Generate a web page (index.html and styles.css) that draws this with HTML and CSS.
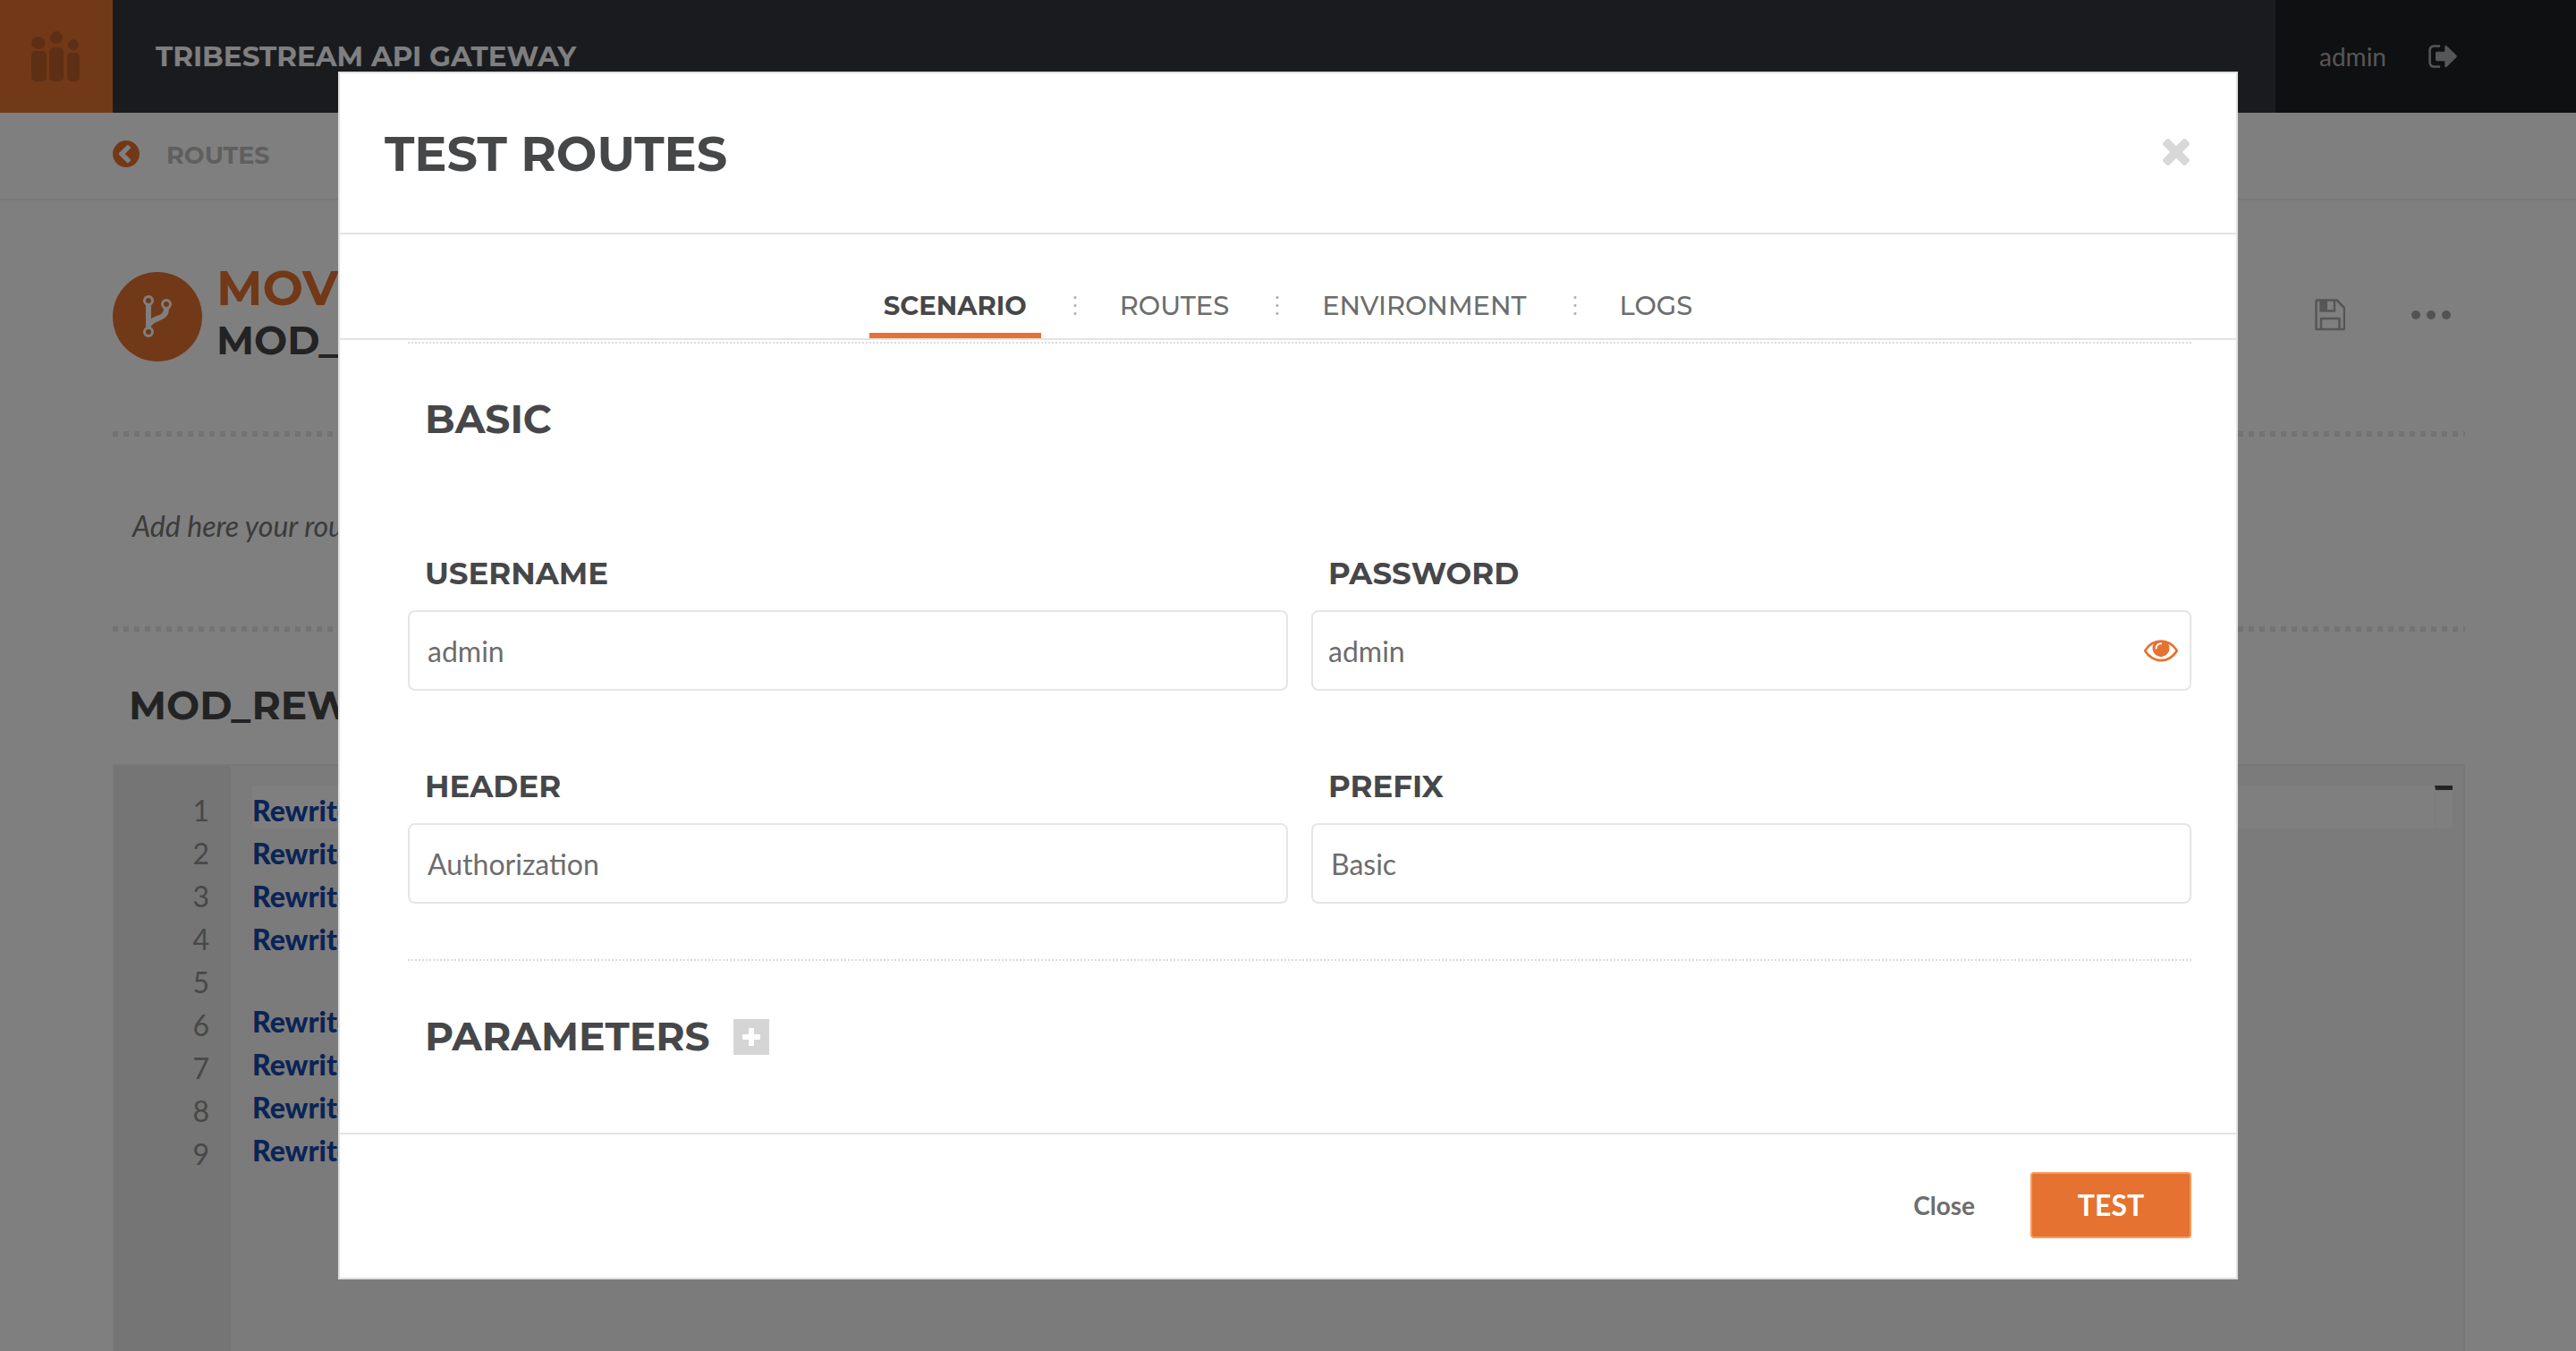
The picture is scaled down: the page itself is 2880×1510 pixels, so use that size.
FILE: index.html
```
<!DOCTYPE html>
<html lang="en">
<head>
<meta charset="utf-8">
<title>Tribestream API Gateway</title>
<link rel="stylesheet" href="styles.css">
</head>
<body>
<div class="page">
  <header class="topbar">
    <a class="logo" href="#" aria-label="Home">
      <svg width="126" height="126" viewBox="0 0 126 126" fill="#bc5e2a">
        <ellipse cx="43" cy="48" rx="8" ry="7"/><rect x="35" y="57" width="17" height="34" rx="5"/>
        <circle cx="63" cy="42" r="7"/><rect x="55" y="53" width="16" height="38" rx="5"/>
        <circle cx="82" cy="50" r="6"/><rect x="75" y="59" width="14" height="32" rx="5"/>
      </svg>
    </a>
    <h1 class="brand">TRIBESTREAM API GATEWAY</h1>
    <div class="account">
      <span>admin</span>
      <button class="icon-btn" aria-label="Sign out">
        <svg width="36" height="36" viewBox="0 0 1792 1792" fill="currentColor"><path d="M704 1440q0 4 1 20t.5 26.5-3 23.5-10 19.5-20.5 6.5h-320q-119 0-203.500-84.500t-84.500-203.500v-704q0-119 84.500-203.500t203.500-84.500h320q13 0 22.500 9.500t9.500 22.500q0 4 1 20t.5 26.500-3 23.500-10 19.500-20.500 6.500h-320q-66 0-113 47t-47 113v704q0 66 47 113t113 47h312l11.500 1 11.500 3 8 5.500 7 9 2 13.500zm928-544q0 26-19 45l-544 544q-19 19-45 19t-45-19-19-45v-288h-448q-26 0-45-19t-19-45v-384q0-26 19-45t45-19h448v-288q0-26 19-45t45-19 45 19l544 544q19 19 19 45z"/></svg>
      </button>
    </div>
  </header>

  <nav class="breadcrumb">
    <a href="#">
      <svg width="30" height="30" viewBox="128 128 1536 1536" fill="#e57230"><path d="M1037 1395l102-102q19-19 19-45t-19-45l-307-307 307-307q19-19 19-45t-19-45l-102-102q-19-19-45-19t-45 19l-454 454q-19 19-19 45t19 45l454 454q19 19 45 19t45-19zm627-499q0 209-103 385.500t-279.500 279.500-385.500 103-385.500-103-279.500-279.500-103-385.500 103-385.500 279.500-279.500 385.500-103 385.500 103 279.500 279.500 103 385.500z"/></svg>
      <span>ROUTES</span>
    </a>
  </nav>

  <main class="content">
    <section class="route-head">
      <div class="route-badge">
        <svg width="32" height="48" viewBox="0 0 32 48" fill="none" stroke="#fff">
          <path stroke-width="6" d="M6 11V37M26 15C26 28 10 24 7 33"/>
          <g fill="#e57230" stroke-width="3"><circle cx="6" cy="6" r="4.500"/><circle cx="26" cy="10" r="4.500"/><circle cx="6" cy="41" r="4.500"/></g>
        </svg>
      </div>
      <div class="route-title">
        <h2>MOVIES</h2>
        <p>MOD_REWRITE</p>
      </div>
      <div class="route-actions">
        <button class="icon-btn" aria-label="Save">
          <svg width="34" height="36" viewBox="0 0 34 36" fill="none" stroke="#acacac" stroke-width="2.500" stroke-linejoin="round"><path d="M2 1.500H24.500L33 10V34H1.500V2Z"/><path d="M6.500 2V13.500H22V2M7 34V22H27.500V34"/><path fill="#acacac" stroke="none" d="M6 2H14V14H6Z"/></svg>
        </button>
        <button class="icon-btn" aria-label="More actions">
          <svg width="44" height="10" viewBox="0 0 44 10" fill="#a5a7a6"><circle cx="5" cy="5" r="5"/><circle cx="22" cy="5" r="5"/><circle cx="39" cy="5" r="5"/></svg>
        </button>
      </div>
    </section>
    <section class="description">Add here your route description</section>
    <h3 class="editor-title">MOD_REWRITE</h3>
    <div class="editor">
      <div class="gutter">
        <ol class="lines"><li>1</li><li>2</li><li>3</li><li>4</li><li>5</li><li>6</li><li>7</li><li>8</li><li>9</li></ol>
      </div>
      <div class="code">
        <div class="lines"><b>RewriteEngine</b><b>RewriteCond</b><b>RewriteCond</b><b>RewriteRule</b><b></b><b>RewriteCond</b><b>RewriteCond</b><b>RewriteCond</b><b>RewriteRule</b></div>
        <div class="ruler"></div>
      </div>
    </div>
  </main>
</div>

<div class="overlay">
  <div class="modal" role="dialog" aria-modal="true" aria-labelledby="dialog-title">
    <header class="modal-head">
      <h2 id="dialog-title">TEST ROUTES</h2>
      <button class="icon-btn close-x" aria-label="Close dialog">
        <svg width="30" height="30" viewBox="302 366 1188 1188" fill="currentColor"><path d="M1490 1322q0 40-28 68l-136 136q-28 28-68 28t-68-28l-294-294-294 294q-28 28-68 28t-68-28l-136-136q-28-28-28-68t28-68l294-294-294-294q-28-28-28-68t28-68l136-136q28-28 68-28t68 28l294 294 294-294q28-28 68-28t68 28l136 136q28 28 28 68t-28 68l-294 294 294 294q28 28 28 68z"/></svg>
      </button>
    </header>

    <div class="tabs" role="tablist">
      <button class="tab active" role="tab" aria-selected="true">SCENARIO</button>
      <i class="dots"></i>
      <button class="tab" role="tab">ROUTES</button>
      <i class="dots"></i>
      <button class="tab" role="tab">ENVIRONMENT</button>
      <i class="dots"></i>
      <button class="tab" role="tab">LOGS</button>
    </div>

    <form class="modal-body" id="scenario">
      <section class="group">
        <h3>BASIC</h3>
        <div class="fields">
          <div class="field"><label for="username">USERNAME</label><input id="username" type="text" value="admin"></div>
          <div class="field">
            <label for="password">PASSWORD</label>
            <div class="secret">
              <input id="password" type="text" value="admin">
              <button type="button" class="icon-btn reveal" aria-label="Hide password">
                <svg width="38" height="38" viewBox="0 0 1792 1792" fill="currentColor"><path d="M1664 960q-152-236-381-353 61 104 61 225 0 185-131.500 316.500t-316.500 131.500-316.500-131.500-131.500-316.500q0-121 61-225-229 117-381 353 133 205 333.500 326.500t434.500 121.500 434.500-121.500 333.500-326.500zm-720-384q0-20-14-34t-34-14q-125 0-214.500 89.500t-89.500 214.500q0 20 14 34t34 14 34-14 14-34q0-86 61-147t147-61q20 0 34-14t14-34zm848 384q0 34-20 69-140 230-376.500 368.500t-499.500 138.500-499.500-139-376.500-368q-20-35-20-69t20-69q140-229 376.500-368t499.500-139 499.500 139 376.500 368q20 35 20 69z"/></svg>
              </button>
            </div>
          </div>
          <div class="field"><label for="header">HEADER</label><input id="header" type="text" value="Authorization"></div>
          <div class="field"><label for="prefix">PREFIX</label><input id="prefix" type="text" value="Basic"></div>
        </div>
      </section>
      <section class="group">
        <h3>PARAMETERS
          <button type="button" class="add" aria-label="Add parameter">
            <svg width="20" height="20" viewBox="0 0 20 20" fill="#fff"><rect x="7" y="0" width="6" height="20" rx="1"/><rect x="0" y="7" width="20" height="6" rx="1"/></svg>
          </button>
        </h3>
      </section>
    </form>

    <footer class="modal-foot">
      <button class="btn-link">Close</button>
      <button class="btn-primary" form="scenario">TEST</button>
    </footer>
  </div>
</div>
</body>
</html>
```
FILE: styles.css
```
* { box-sizing: border-box; margin: 0; padding: 0; }

:root {
  --accent: #e57230;
  --ink: #464749;
  --muted: #6d6d6d;
  --line: #e3e3e3;
  --heading: Montserrat, Inter, "Liberation Sans", sans-serif;
}

body {
  font: 400 32px/40px Lato, "Liberation Sans", sans-serif;
  color: var(--muted);
  background: #fff;
}

button, input { font: inherit; color: inherit; background: none; border: 0; }
button { cursor: pointer; }
a { color: inherit; text-decoration: none; }
svg { display: block; }
ol { list-style: none; }

/* Page behind the dialog */
.page { display: flex; flex-direction: column; height: 100vh; overflow: hidden; }

.topbar { display: flex; align-items: stretch; flex: none; height: 126px; background: #35373f; }
.logo { width: 126px; background: var(--accent); }
.brand {
  flex: 1;
  padding-left: 48px;
  font: 700 31px/126px var(--heading);
  color: #fff;
}
.account {
  display: flex;
  align-items: center;
  gap: 46px;
  width: 336px;
  padding-left: 49px;
  font-size: 28px;
  color: #adadad;
  background: #1f2125;
}

.breadcrumb { flex: none; padding-left: 126px; border-bottom: 2px solid #f3f3f3; }
.breadcrumb a {
  display: inline-flex;
  align-items: center;
  gap: 30px;
  height: 96px;
  font: 700 27px/34px var(--heading);
  color: #bebebe;
  vertical-align: top;
}
.breadcrumb svg { margin-bottom: 4px; }

.content { display: flex; flex-direction: column; flex: 1; min-height: 0; padding: 0 124px 0 126px; }
.route-head, .description {
  flex: none;
  background: repeating-linear-gradient(90deg, #e6e6e6 0 6px, transparent 6px 12px) 0 100% / 100% 6px no-repeat;
}
.route-head { display: flex; align-items: flex-start; gap: 16px; height: 264px; padding: 66px 16px 0 0; }
.route-badge {
  display: grid;
  place-items: center;
  width: 100px;
  height: 100px;
  margin-top: 14px;
  border-radius: 50%;
  background: var(--accent);
}
.route-title { flex: 1; font-family: var(--heading); font-weight: 700; }
.route-title h2 { font-size: 54px; line-height: 64px; color: var(--accent); }
.route-title p { font-size: 44px; line-height: 52px; color: var(--ink); }
.route-actions { display: flex; align-items: center; gap: 74px; height: 124px; }

.description { height: 218px; padding: 80px 22px 0; font-style: italic; color: #767676; }

.editor-title { flex: none; padding: 52px 18px 36px; font: 700 44px/60px var(--heading); color: var(--ink); }
.editor { display: flex; flex: 1; border: 2px solid #eee; border-bottom: 0; background: #f7f7f7; }
.gutter { width: 130px; padding: 22px 24px 0 0; text-align: right; color: #909090; background: #ebebeb; }
.code { position: relative; flex: 1; padding: 22px 12px 0 24px; font-weight: 700; color: #1448ac; }
.lines { display: grid; grid-auto-rows: 1fr; height: 432px; padding-top: 4px; line-height: 48px; }
.code .lines { background: linear-gradient(#fff, #fff) 0 0 / 100% 48px no-repeat; }
.ruler {
  position: absolute;
  top: 22px;
  right: 12px;
  width: 20px;
  height: 48px;
  border-top: 5px solid #484848;
  border-left: 1px solid #f7f7f7;
}

/* Dialog */
.overlay { position: fixed; inset: 0; display: flex; padding: 80px 378px; background: rgba(0, 0, 0, .5); }
.modal { display: flex; flex-direction: column; flex: 1; border: 2px solid #e0e0e0; background: #fff; }

.modal-head {
  display: flex;
  align-items: center;
  justify-content: space-between;
  height: 180px;
  padding: 0 52px 0 50px;
  border-bottom: 2px solid var(--line);
}
.modal-head h2 { padding-top: 2px; font: 700 54px/64px var(--heading); color: var(--ink); }
.close-x { padding-bottom: 2px; color: #d8d8d8; }

.tabs {
  display: flex;
  justify-content: center;
  align-items: flex-end;
  height: 118px;
  border-bottom: 2px solid var(--line);
}
.tab { padding: 0 16px 12px; border-bottom: 6px solid transparent; font: 500 29px/36px var(--heading); }
.tab.active { font-weight: 700; color: var(--ink); border-color: var(--accent); }
.dots {
  width: 4px;
  height: 27px;
  margin: 0 32px 23px 36px;
  background: radial-gradient(circle, #b0b0b0 1px, transparent 2px) 0 0 / 4px 9px repeat-y;
}

.modal-body { flex: 1; min-height: 0; overflow: hidden; padding: 2px 50px 0 76px; }
.group { padding: 57px 0 62px; border-top: 2px dotted #dcdcdc; }
.group h3 {
  display: flex;
  align-items: center;
  gap: 26px;
  padding-left: 19px;
  font: 700 44px/54px var(--heading);
  color: var(--ink);
}
.add { display: grid; place-items: center; width: 40px; height: 40px; margin-top: 2px; background: #d5d5d5; }

.fields { display: grid; grid-template-columns: 1fr 1fr; gap: 85px 26px; margin-top: 124px; }
.field { display: flex; flex-direction: column; gap: 19px; }
.field label { padding-left: 19px; font: 700 34px/44px var(--heading); color: var(--ink); }
.field input { width: 100%; height: 90px; padding: 0 20px; border: 2px solid #e5e5e5; border-radius: 8px; }
.secret { position: relative; }
.secret input { padding: 0 70px 0 17px; }
.reveal { position: absolute; top: 25px; right: 15px; color: var(--accent); }

.modal-foot {
  display: flex;
  align-items: center;
  justify-content: flex-end;
  gap: 62px;
  height: 162px;
  padding: 0 50px 2px 0;
  border-top: 2px solid var(--line);
}
.btn-link { font-size: 28px; font-weight: 700; }
.btn-primary {
  width: 180px;
  height: 74px;
  border: 2px solid #f89a5c;
  border-radius: 4px;
  font-weight: 700;
  color: #fff;
  background: #e57230;
}
```
